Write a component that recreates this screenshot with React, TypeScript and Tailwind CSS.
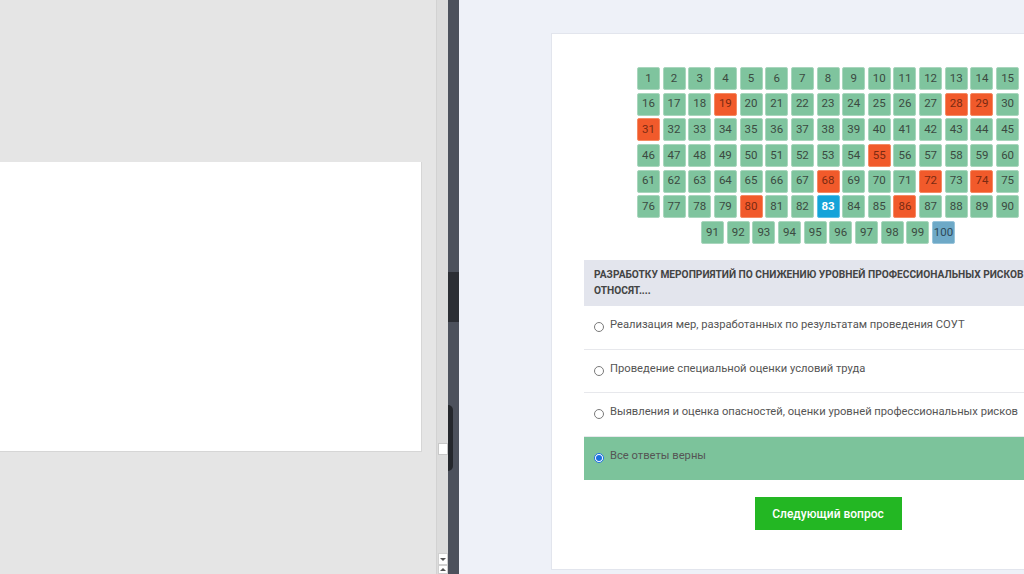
import React from "react";

const orange = new Set([19, 28, 29, 31, 55, 68, 72, 74, 80, 86]);

function Cell({ n }: { n: number }) {
  let cls = "bg-[#7fc49e] text-[#3b4a41] border-[#a9d6bd]";
  if (orange.has(n)) cls = "bg-[#f15a2b] text-[#7a2a12] border-[#f58a63]";
  if (n === 83) cls = "bg-[#14a3d9] text-white font-bold border-[#5cc0e6]";
  if (n === 100) cls = "bg-[#6ea9c7] text-[#2f4a5a] border-[#98c4da]";
  return (
    <div
      className={`w-[23px] h-[23px] rounded-[2px] border flex items-center justify-center text-[11.5px] leading-none ${cls}`}
    >
      {n}
    </div>
  );
}

function Radio({ checked }: { checked?: boolean }) {
  return checked ? (
    <div className="w-[10px] h-[10px] rounded-full bg-white border border-[#1a6fe0] flex items-center justify-center shrink-0 mt-[5px]">
      <div className="w-[6px] h-[6px] rounded-full bg-[#1a6fe0]" />
    </div>
  ) : (
    <div className="w-[10px] h-[10px] rounded-full bg-white border border-[#7a7a7a] shrink-0 mt-[5px]" />
  );
}

function Answer({
  text,
  checked,
  last,
}: {
  text: string;
  checked?: boolean;
  last?: boolean;
}) {
  return (
    <div
      className={`h-[43.5px] flex items-start gap-[6px] pl-[10px] pt-[11px] ${
        checked ? "bg-[#7cc39b]" : "bg-white"
      } ${last ? "" : "border-b border-[#e7e8ec]"}`}
    >
      <Radio checked={checked} />
      <div className="text-[11.2px] leading-[16px] text-[#555] whitespace-nowrap">
        {text}
      </div>
    </div>
  );
}

export default function App() {
  const nums = Array.from({ length: 100 }, (_, i) => i + 1);
  return (
    <div
      className="w-[1024px] h-[574px] overflow-hidden flex"
      style={{ fontFamily: "Roboto, 'Noto Sans', sans-serif" }}
    >
      {/* left panel */}
      <div className="w-[436px] h-full bg-[#e5e5e5] pt-[162px] shrink-0">
        <div className="w-[422px] h-[290px] bg-white border-r border-b border-[#d6d6d6]" />
      </div>
      {/* scrollbar */}
      <div className="w-[12px] h-full bg-[#dcdcdc] border-l border-[#d2d2d2] flex flex-col items-center shrink-0">
        <div className="h-[443px]" />
        <div className="w-[10px] h-[12px] bg-white border border-[#c8c8c8]" />
        <div className="flex-1" />
        <div className="w-[10px] h-[12px] bg-white border border-[#d0d0d0] flex items-center justify-center">
          <div className="w-0 h-0 border-l-[3px] border-r-[3px] border-t-[3px] border-l-transparent border-r-transparent border-t-[#555]" />
        </div>
        <div className="w-[10px] h-[9px] bg-white border border-[#d0d0d0] flex items-center justify-center">
          <div className="w-0 h-0 border-l-[3px] border-r-[3px] border-b-[3px] border-l-transparent border-r-transparent border-b-[#555]" />
        </div>
      </div>
      {/* dark strip */}
      <div className="w-[11px] h-full bg-[#4c515c] flex flex-col shrink-0">
        <div className="h-[272px]" />
        <div className="h-[50px] bg-[#2b2e34]" />
        <div className="h-[83px]" />
        <div className="h-[66px] w-[5px] rounded-r-full bg-[#24272c]" />
      </div>
      {/* right area */}
      <div className="flex-1 h-full bg-[#eef1f8] pl-[92px] pt-[33px] overflow-hidden">
        <div className="w-[554px] h-[537px] bg-white border border-[#e2e5ed] pt-[33px] px-[32px]">
          <div className="w-[385px] mx-auto flex flex-wrap justify-center gap-[2.67px]">
            {nums.map((n) => (
              <Cell key={n} n={n} />
            ))}
          </div>
          <div className="mt-[16.5px] h-[46px] bg-[#e3e5ed] pl-[10px] pt-[7px] text-[10.2px] leading-[16px] font-bold text-[#444] whitespace-nowrap overflow-hidden">
            РАЗРАБОТКУ МЕРОПРИЯТИЙ ПО СНИЖЕНИЮ УРОВНЕЙ ПРОФЕССИОНАЛЬНЫХ РИСКОВ
            <br />
            ОТНОСЯТ....
          </div>
          <Answer text="Реализация мер, разработанных по результатам проведения СОУТ" />
          <Answer text="Проведение специальной оценки условий труда" />
          <Answer text="Выявления и оценка опасностей, оценки уровней профессиональных рисков" />
          <Answer text="Все ответы верны" checked last />
          <div className="flex justify-center mt-[17px]">
            <button className="w-[147px] h-[33px] bg-[#23b723] text-white text-[12px] font-medium">
              Следующий вопрос
            </button>
          </div>
        </div>
      </div>
    </div>
  );
}
